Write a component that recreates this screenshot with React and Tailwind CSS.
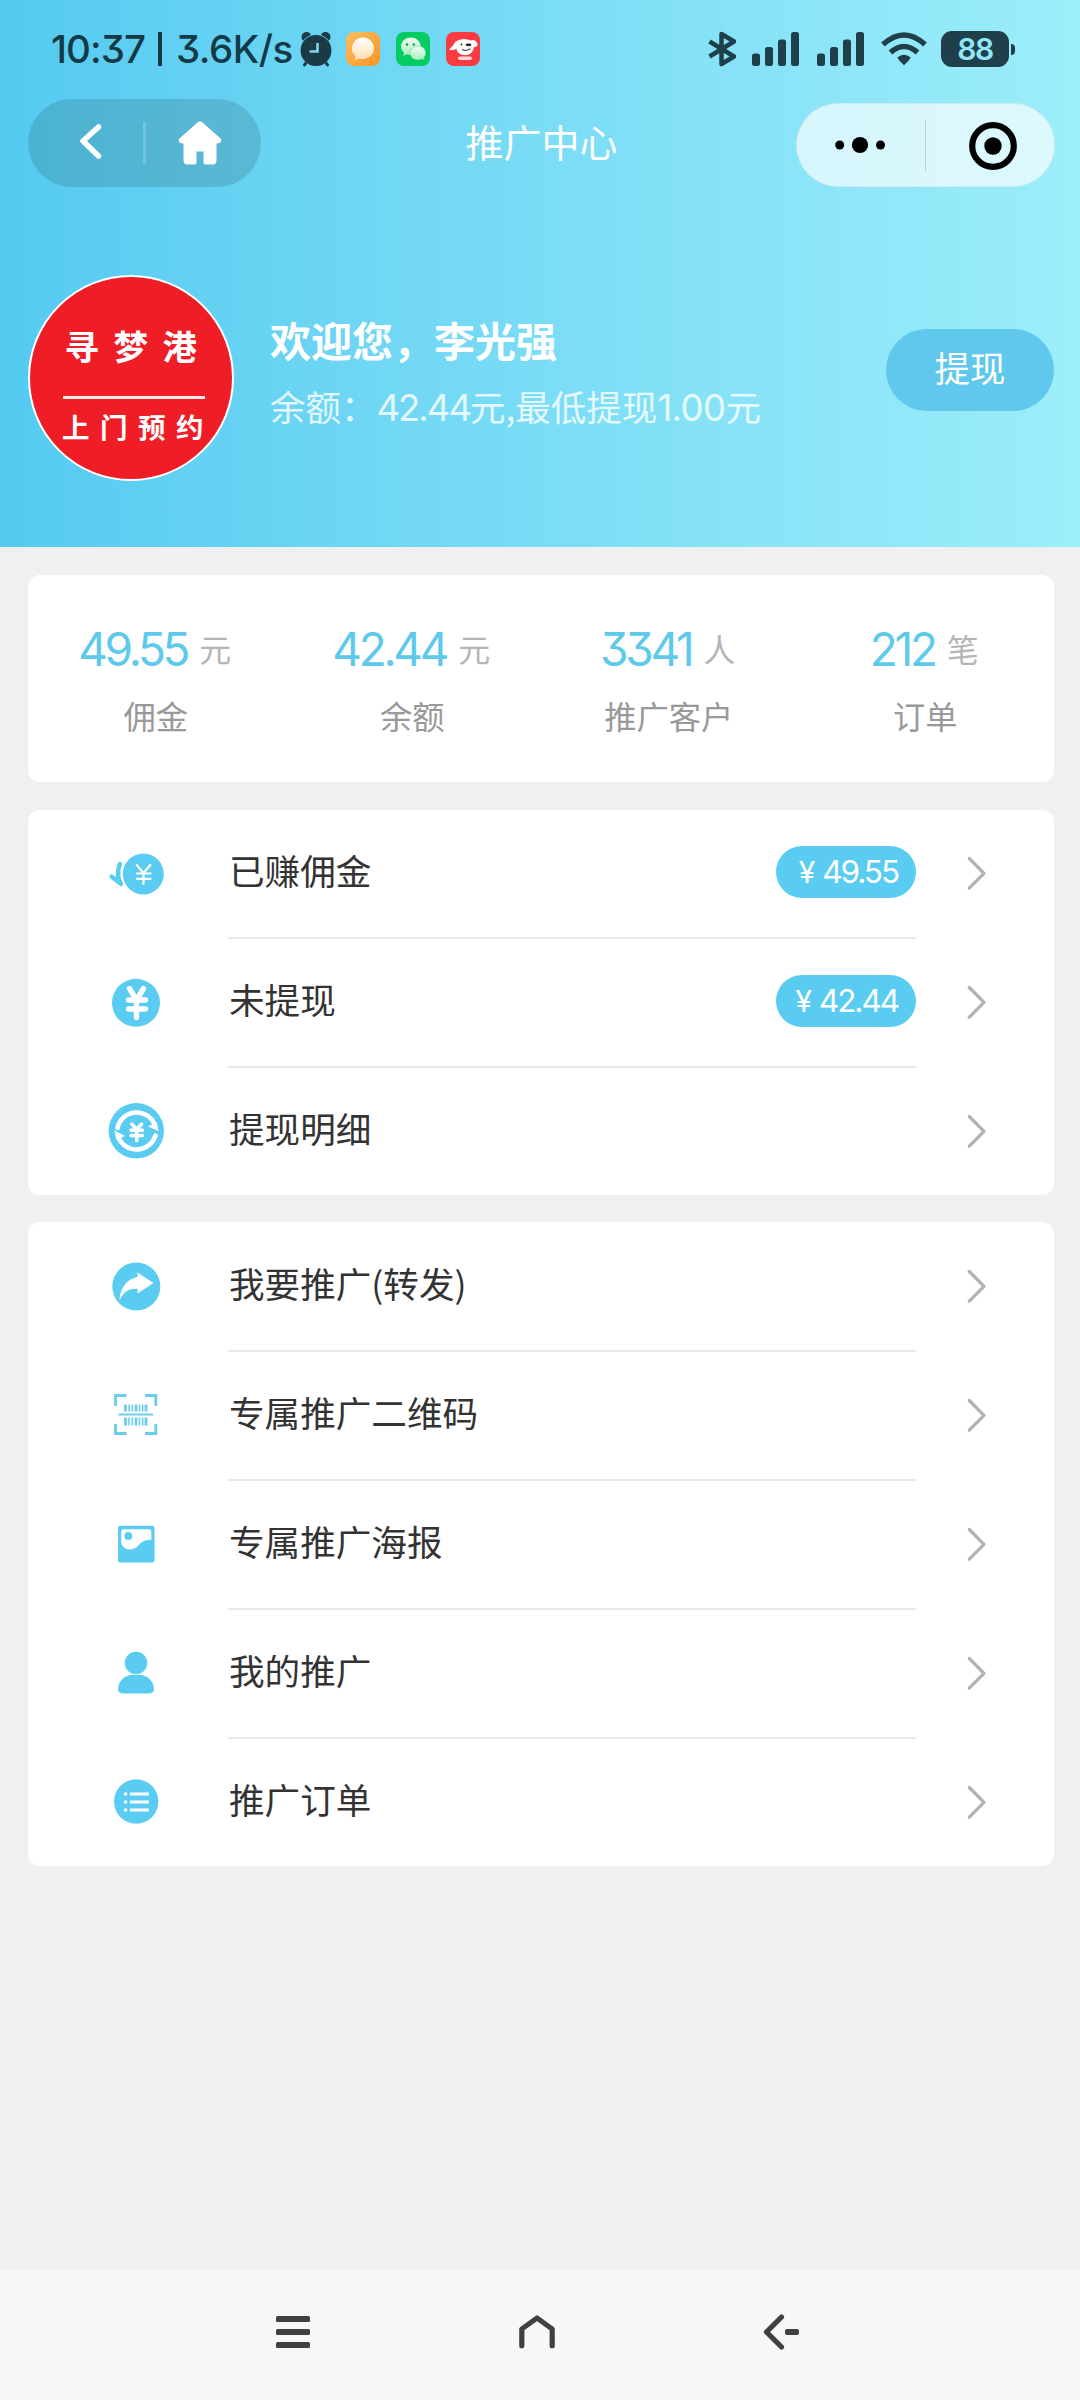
import React from "react";

const BLUE = "#5accf1";

/* ---------- status bar ---------- */

function AlarmIcon() {
  return (
    <svg width="32" height="36" viewBox="0 0 32 36" fill="#1b3a46">
      <circle cx="6.5" cy="6" r="5" />
      <circle cx="25.5" cy="6" r="5" />
      <circle cx="16" cy="19.5" r="16.3" fill="#62cff2" />
      <circle cx="16" cy="19.5" r="15.4" />
      <path d="M17.5 12 V20.5 H9.5" fill="none" stroke="#7fd6ee" strokeWidth="2.6" />
      <path d="M5.5 32.5 L4.5 34 M26.5 32.5 L27.5 34" stroke="#1b3a46" strokeWidth="3" strokeLinecap="round" />
    </svg>
  );
}

function ChatAppIcon() {
  return (
    <svg width="34" height="34" viewBox="0 0 34 34">
      <defs>
        <linearGradient id="chatBg" x1="0" y1="0" x2="1" y2="1">
          <stop offset="0" stopColor="#f6bf62" />
          <stop offset="1" stopColor="#fb9423" />
        </linearGradient>
        <linearGradient id="chatBubble" x1="0" y1="0" x2="0" y2="1">
          <stop offset="0" stopColor="#ffffff" />
          <stop offset="1" stopColor="#ffdcae" />
        </linearGradient>
      </defs>
      <rect width="34" height="34" rx="8" fill="url(#chatBg)" />
      <path d="M17 5.5 a11.3 10.8 0 1 1 -4 21 q-2 1.8 -4.5 1.8 q1.3 -2 .7 -4.4 A11 10.8 0 0 1 17 5.5z" fill="url(#chatBubble)" />
    </svg>
  );
}

function WeChatIcon() {
  return (
    <svg width="34" height="34" viewBox="0 0 34 34">
      <defs>
        <linearGradient id="wxBubble" x1="0" y1="0" x2="0" y2="1">
          <stop offset="0" stopColor="#f2fff6" />
          <stop offset="1" stopColor="#a5eebb" />
        </linearGradient>
      </defs>
      <rect width="34" height="34" rx="8" fill="#05cb63" />
      <path d="M14.5 5.5 a10 8.8 0 1 1 -4 16.8 l-3.3 1.6 .8 -3.3 A9.6 8.8 0 0 1 14.5 5.5z" fill="url(#wxBubble)" />
      <circle cx="11" cy="12.5" r="1.2" fill="#0a9d4b" />
      <circle cx="17.8" cy="12.5" r="1.2" fill="#0a9d4b" />
      <path d="M22 14 a7.8 7 0 0 1 6 11.5 l.4 2.6 -2.7 -1 A7.9 7 0 1 1 22 14z" fill="url(#wxBubble)" stroke="#38d27d" strokeWidth=".5" />
    </svg>
  );
}

function DogAppIcon() {
  return (
    <svg width="34" height="34" viewBox="0 0 34 34">
      <rect width="34" height="34" rx="8" fill="#fb3a41" />
      <path d="M9.500 9.500 Q17 5 25 8.500 Q29 6.500 31.500 12 Q31.500 15.500 28 15 Q27 22.500 19.500 23.200 Q11 23 10.300 16.500 Q7.500 19.500 3 17.500 Q7 14.500 9.500 9.500z" fill="#fff" />
      <ellipse cx="22.500" cy="12.800" rx="3" ry="1.400" fill="#2a2020" />
      <circle cx="15.500" cy="12.500" r=".9" fill="#2a2020" />
      <path d="M16 17.800 q4.500 1.800 8.500 -1" fill="none" stroke="#2a2020" strokeWidth="1" />
      <rect x="12" y="24.500" width="14" height="3.600" rx="1.800" fill="#ffd9d9" />
    </svg>
  );
}

function BluetoothIcon() {
  return (
    <svg width="28" height="36" viewBox="0 0 28 36" fill="none" stroke="#1f3f4a" strokeWidth="4.500" strokeLinejoin="round">
      <path d="M1.500 10.500 L26 25.500 L13.500 33 V3 L26 10.500 L1.500 25.500" />
    </svg>
  );
}

function SignalIcon() {
  return (
    <svg width="47" height="34" viewBox="0 0 47 34" fill="#1f3f4a">
      <rect x="0" y="21.500" width="8" height="12.500" rx="2.500" />
      <rect x="13" y="15" width="8" height="19" rx="2.500" />
      <rect x="26" y="7.500" width="8" height="26.500" rx="2.500" />
      <rect x="39" y="0" width="8" height="34" rx="2.500" />
    </svg>
  );
}

function WifiIcon() {
  return (
    <svg width="46" height="34" viewBox="0 0 46 34">
      <g fill="none" stroke="#1f3f4a" strokeWidth="5.500">
        <path d="M2 12.500 Q23 -6.500 44 12.500" />
        <path d="M9.500 20.500 Q23 8.500 36.500 20.500" />
      </g>
      <path d="M16.300 25.500 Q23 20 29.700 25.500 Q28 29 23 33.200 Q18 29 16.300 25.500z" fill="#1f3f4a" />
    </svg>
  );
}

function StatusBar() {
  return (
    <div className="flex h-[98px] items-center pl-[51px] pr-[65px]">
      <div className="flex h-[98px] w-[249px] items-center whitespace-nowrap pt-0.5 font-['Inter'] text-[38.500px] font-medium tracking-[-0.9px] text-[#143a48] [font-feature-settings:'cv09']">
        <span className="w-[98px]">10:37</span>
        <span className="-mt-0.5 ml-[9px] h-[34px] w-1 bg-[#143a48]" />
        <span className="ml-[14px] tracking-[-0.5px]">3.6K/s</span>
      </div>
      <AlarmIcon />
      <div className="ml-[14px] flex gap-4">
        <ChatAppIcon />
        <WeChatIcon />
        <DogAppIcon />
      </div>
      <div className="ml-auto flex items-center">
        <BluetoothIcon />
        <div className="ml-4 flex gap-[18px]">
          <SignalIcon />
          <SignalIcon />
        </div>
        <div className="ml-[17px]">
          <WifiIcon />
        </div>
        <div className="ml-[14px] flex h-9 w-[68px] items-center justify-center rounded-[11px] bg-[#1f3f4a] font-['Inter'] text-[30px] font-semibold tracking-[-1.500px] text-[#92e6f8]">
          88
        </div>
        <div className="ml-0.5 h-[11px] w-1 rounded-r-full bg-[#1f3f4a]" />
      </div>
    </div>
  );
}

/* ---------- header ---------- */

function NavBar() {
  return (
    <div className="grid h-[90px] grid-cols-3 items-start pl-7 pr-[25px]">
      <div className="mt-px flex h-[88px] w-[233px] items-center rounded-full bg-black/12">
        <svg className="ml-[50px]" width="24" height="40" viewBox="0 0 24 40" fill="none" stroke="#fff" strokeWidth="5.500" strokeLinecap="round" strokeLinejoin="round">
          <path d="M20.500 4 L5 18 L20.500 33" />
        </svg>
        <div className="ml-[41px] h-[42px] w-[3px] bg-white/20" />
        <svg className="ml-8" width="44" height="44" viewBox="0 0 44 44" fill="#fff">
          <path d="M20 .9 q2 -1.400 4 0 L42.500 17.500 q1.500 2 0 4 q-1 1 -4 1 V39.500 q0 4 -4 4 H27.500 q-2 0 -2 -2 V30.500 H18.500 V41.500 q0 2 -2 2 H9.500 q-4 0 -4 -4 V22.500 q-3 0 -4 -1 q-1.500 -2 0 -4z" />
        </svg>
      </div>
      <h1 className="pt-[24px] text-center text-[38px] leading-[38px] text-white">推广中心</h1>
      <div className="mt-[5px] flex h-[84px] w-[259px] items-center justify-self-end rounded-full border border-black/5 bg-white/65">
        <svg className="ml-[38px]" width="50" height="18" viewBox="0 0 50 18">
          <circle cx="4.700" cy="9" r="4.500" />
          <circle cx="25" cy="9" r="8.100" />
          <circle cx="45.500" cy="9" r="4.500" />
        </svg>
        <div className="ml-10 h-[52px] w-px bg-black/15" />
        <svg className="ml-[42px]" width="50" height="50" viewBox="0 0 50 50">
          <circle cx="25" cy="26" r="20.800" fill="none" stroke="#000" strokeWidth="6.200" />
          <circle cx="25" cy="26" r="8.700" />
        </svg>
      </div>
    </div>
  );
}

function Profile() {
  return (
    <div className="flex pl-7 pr-[26px] pt-[87px]">
      <div className="flex h-[206px] w-[206px] shrink-0 flex-col items-center rounded-full border-2 border-white bg-[#ef1d26] font-bold text-white">
        <div className="mt-[51px] pl-[14px] text-[34.500px] leading-[35px] tracking-[14.500px]">寻梦港</div>
        <div className="ml-[5px] mt-[33px] h-[2.500px] w-[142px] bg-white/90" />
        <div className="mt-[13px] pl-[14px] text-[27.500px] leading-7 tracking-[10.500px]">上门预约</div>
      </div>
      <div className="ml-[36px] flex flex-col pt-[43px]">
        <div className="text-[41px] font-bold leading-[42px] text-white">欢迎您，李光强</div>
        <div className="mt-[28px] whitespace-nowrap text-[35.500px] leading-9 text-white/80">
          余额：<Num className="text-[36.500px] tracking-[-0.055em]">42.44</Num>元,最低提现
          <Num className="text-[36.500px] tracking-[-0.6px]">1.00</Num>元
        </div>
      </div>
      <button className="ml-auto mt-[54px] h-[82px] w-[168px] rounded-full bg-[#60c8ec] pb-1.5 text-[35.500px] leading-9 text-white">
        提现
      </button>
    </div>
  );
}

function Num({ className, children }) {
  return <span className={"font-['Inter'] [font-feature-settings:'cv09'] " + className}>{children}</span>;
}

/* ---------- stats ---------- */

const stats = [
  { value: "49.55", unit: "元", label: "佣金" },
  { value: "42.44", unit: "元", label: "余额" },
  { value: "3341", unit: "人", label: "推广客户" },
  { value: "212", unit: "笔", label: "订单" },
];

function Stats() {
  return (
    <div className="mt-7 grid h-[207px] grid-cols-4 rounded-xl bg-white pt-[50px] text-center">
      {stats.map((s) => (
        <div key={s.label}>
          <div className="flex h-12 items-center justify-center pr-[3px] text-[#5ec9ea]">
            <Num className="text-[46px] leading-[48px] tracking-[-0.072em]">{s.value}</Num>
            <span className="-mt-[3px] ml-3 text-[32px] leading-8 text-[#b5b5b5]">{s.unit}</span>
          </div>
          <div className="mt-[26px] pr-px text-[32.300px] leading-8 text-[#999]">{s.label}</div>
        </div>
      ))}
    </div>
  );
}

/* ---------- menu icons ---------- */

function MenuIcon({ children }) {
  return (
    <svg width="64" height="64" viewBox="0 0 64 64" className="shrink-0" fill={BLUE}>
      {children}
    </svg>
  );
}

const EarnedIcon = () => (
  <MenuIcon>
    <path d="M16 22 Q11.500 32 17 42 L7.500 34.500 M14.500 30 L13.500 37" fill="none" stroke={BLUE} strokeWidth="4.400" strokeLinecap="round" strokeLinejoin="round" />
    <circle cx="39.300" cy="32" r="20.500" />
    <path d="M32.700 23 L39.500 31 L46.300 23 M39.500 31 V42 M33 31.500 H46.500 M33 36.800 H46.500" fill="none" stroke="#fff" strokeWidth="2.200" strokeLinecap="round" />
  </MenuIcon>
);

const YuanIcon = () => (
  <MenuIcon>
    <circle cx="32" cy="31.800" r="24" />
    <path d="M25.500 17.500 L32.500 29 L39.500 17.500 M32.500 29 V46.500 M24.500 29 H41.500 M24.500 38 H41.500" fill="none" stroke="#fff" strokeWidth="5.300" strokeLinecap="round" strokeLinejoin="round" />
  </MenuIcon>
);

const DetailIcon = () => (
  <MenuIcon>
    <circle cx="32.300" cy="30.800" r="27.700" />
    <g fill="none" stroke="#fff" strokeWidth="4.600">
      <path d="M13.500 28 A19.500 19.500 0 0 1 51 25.500" strokeLinecap="round" />
      <path d="M51.500 35.500 A19.800 19.800 0 0 1 14 36.500" strokeLinecap="round" />
    </g>
    <path d="M44 26.500 L54.800 31.300 L52.500 22z M10.500 30.500 L21 36 L12.500 40z" fill="#fff" />
    <path d="M27.800 24 L32.700 29.500 L37.600 24 M32.700 29.500 V40.500 M27 30.300 H38.500 M27 35.500 H38.500" fill="none" stroke="#fff" strokeWidth="3.500" strokeLinecap="round" />
  </MenuIcon>
);

const ShareIcon = () => (
  <MenuIcon>
    <circle cx="32.300" cy="31.500" r="24" />
    <path d="M15.500 45.500 C15.500 34 23 23.500 33.500 22 V17.500 L49.500 28 L33.500 38.500 V33.800 C25 33.500 20 36 15.500 45.500z" fill="#fff" />
  </MenuIcon>
);

const ScanIcon = () => (
  <MenuIcon>
    <g fill="none" stroke="#6bcdeb" strokeWidth="2.800">
      <path d="M11.500 22 V11.500 H22.500 M41 11.500 H51.800 V22 M51.800 40 V49.500 H41 M22.500 49.500 H11.500 V40" />
      <path d="M14.500 30.500 H49" strokeWidth="2.200" />
    </g>
    <g stroke="#6bcdeb">
      <path d="M21.500 20.500 V27.500 M32 20.500 V27.500 M42 20.500 V27.500 M21.500 33.500 V41.500 M32 33.500 V41.500 M42 33.500 V41.500" strokeWidth="2.800" />
      <path d="M25 20.500 V27.500 M28.300 20.500 V27.500 M35.500 20.500 V27.500 M38.700 20.500 V27.500 M25 33.500 V41.500 M28.300 33.500 V41.500 M35.500 33.500 V41.500 M38.700 33.500 V41.500" strokeWidth="1.600" />
    </g>
  </MenuIcon>
);

const PosterIcon = () => (
  <MenuIcon>
    <rect x="14" y="12.800" width="36.500" height="36.700" rx="2" />
    <path d="M19.500 16.300 H45 Q47.300 16.300 47.300 18.500 V26.800 C40 27 37.500 29 34 33 C28 39 17.200 37 17.200 28 V18.500 Q17.200 16.300 19.500 16.300z" fill="#fff" />
    <circle cx="24.300" cy="22.900" r="3.900" />
  </MenuIcon>
);

const PersonIcon = () => (
  <MenuIcon>
    <circle cx="32" cy="21" r="11.200" />
    <path d="M28 33 H36 C44 33 50 40 50 47 Q50 51.500 44 51.500 H20 Q14 51.500 14 47 C14 40 20 33 28 33z" />
  </MenuIcon>
);

const OrdersIcon = () => (
  <MenuIcon>
    <circle cx="32.200" cy="30.500" r="22.200" />
    <path d="M20 22.900 H23.200 M20 30.900 H23.200 M20 38.900 H23.200 M26 22.900 H44.800 M26 30.900 H44.800 M26 38.900 H44.800" stroke="#fff" strokeWidth="3" />
  </MenuIcon>
);

/* ---------- menu ---------- */

function Row({ icon: Icon, label, badge, last }) {
  return (
    <div className={"flex pl-[76px] " + (last ? "h-[127px]" : "h-[129px]")}>
      <div className="flex h-[127px] items-center">
        <Icon />
      </div>
      <div className={"ml-[60px] flex w-[688px] items-center justify-between " + (last ? "pb-[7px]" : "border-b-2 border-[#e8e8e8] pb-1")}>
        <span className={"pl-px text-[35.600px] leading-9 text-[#333] " + (last ? "" : "-mt-[3px]")}>{label}</span>
        {badge && (
          <span className="flex h-[52px] w-[140px] items-center justify-end rounded-full bg-[#5accf1] pr-[18px] text-white">
            <Num className="text-[30px] leading-8">¥</Num>
            <Num className="ml-[7px] text-[31.500px] leading-8 tracking-[-0.065em]">{badge}</Num>
          </span>
        )}
      </div>
      <div className="ml-[50px] flex h-[127px] items-center">
        <svg width="22" height="36" viewBox="0 0 22 36" fill="none" stroke="#b2b2b2" strokeWidth="3.300" strokeLinecap="round" strokeLinejoin="round">
          <path d="M3.300 2.500 L18 17.300 L3.300 32.200" />
        </svg>
      </div>
    </div>
  );
}

export default function App() {
  return (
    <div className="flex h-[2400px] w-[1080px] flex-col bg-[#f0f0f0] font-['Noto_Sans_CJK_SC',sans-serif]">
      <header className="h-[547px] bg-linear-to-r from-[#54caf0] to-[#9ceefa]">
        <StatusBar />
        <NavBar />
        <Profile />
      </header>
      <main className="flex-1 pl-7 pr-[26px]">
        <Stats />
        <section className="mt-7 rounded-xl bg-white">
          <Row icon={EarnedIcon} label="已赚佣金" badge="49.55" />
          <Row icon={YuanIcon} label="未提现" badge="42.44" />
          <Row icon={DetailIcon} label="提现明细" last />
        </section>
        <section className="mt-[27px] rounded-xl bg-white pt-px">
          <Row icon={ShareIcon} label="我要推广(转发)" />
          <Row icon={ScanIcon} label="专属推广二维码" />
          <Row icon={PosterIcon} label="专属推广海报" />
          <Row icon={PersonIcon} label="我的推广" />
          <Row icon={OrdersIcon} label="推广订单" last />
        </section>
      </main>
      <nav className="flex h-[130px] items-start bg-[#f7f7f7] pl-[276px] pt-11">
        <svg width="34" height="36" viewBox="0 0 34 36" fill="#404040">
          <rect y="2" width="34" height="6" rx="1.500" />
          <rect y="15" width="34" height="6" rx="1.500" />
          <rect y="28" width="34" height="6" rx="1.500" />
        </svg>
        <svg className="ml-[209px]" width="36" height="36" viewBox="0 0 36 36" fill="none" stroke="#404040" strokeWidth="5.200" strokeLinecap="round" strokeLinejoin="round">
          <path d="M2.800 31.700 V15 L18 4 L33.200 15 V31.700" />
        </svg>
        <svg className="ml-[208px]" width="37" height="36" viewBox="0 0 37 36" fill="none" stroke="#404040" strokeWidth="5.200" strokeLinecap="round" strokeLinejoin="round">
          <path d="M18.500 3 L3.500 18 L18.500 33" />
          <rect x="22" y="15" width="14" height="6" rx="2" fill="#404040" stroke="none" />
        </svg>
      </nav>
    </div>
  );
}
